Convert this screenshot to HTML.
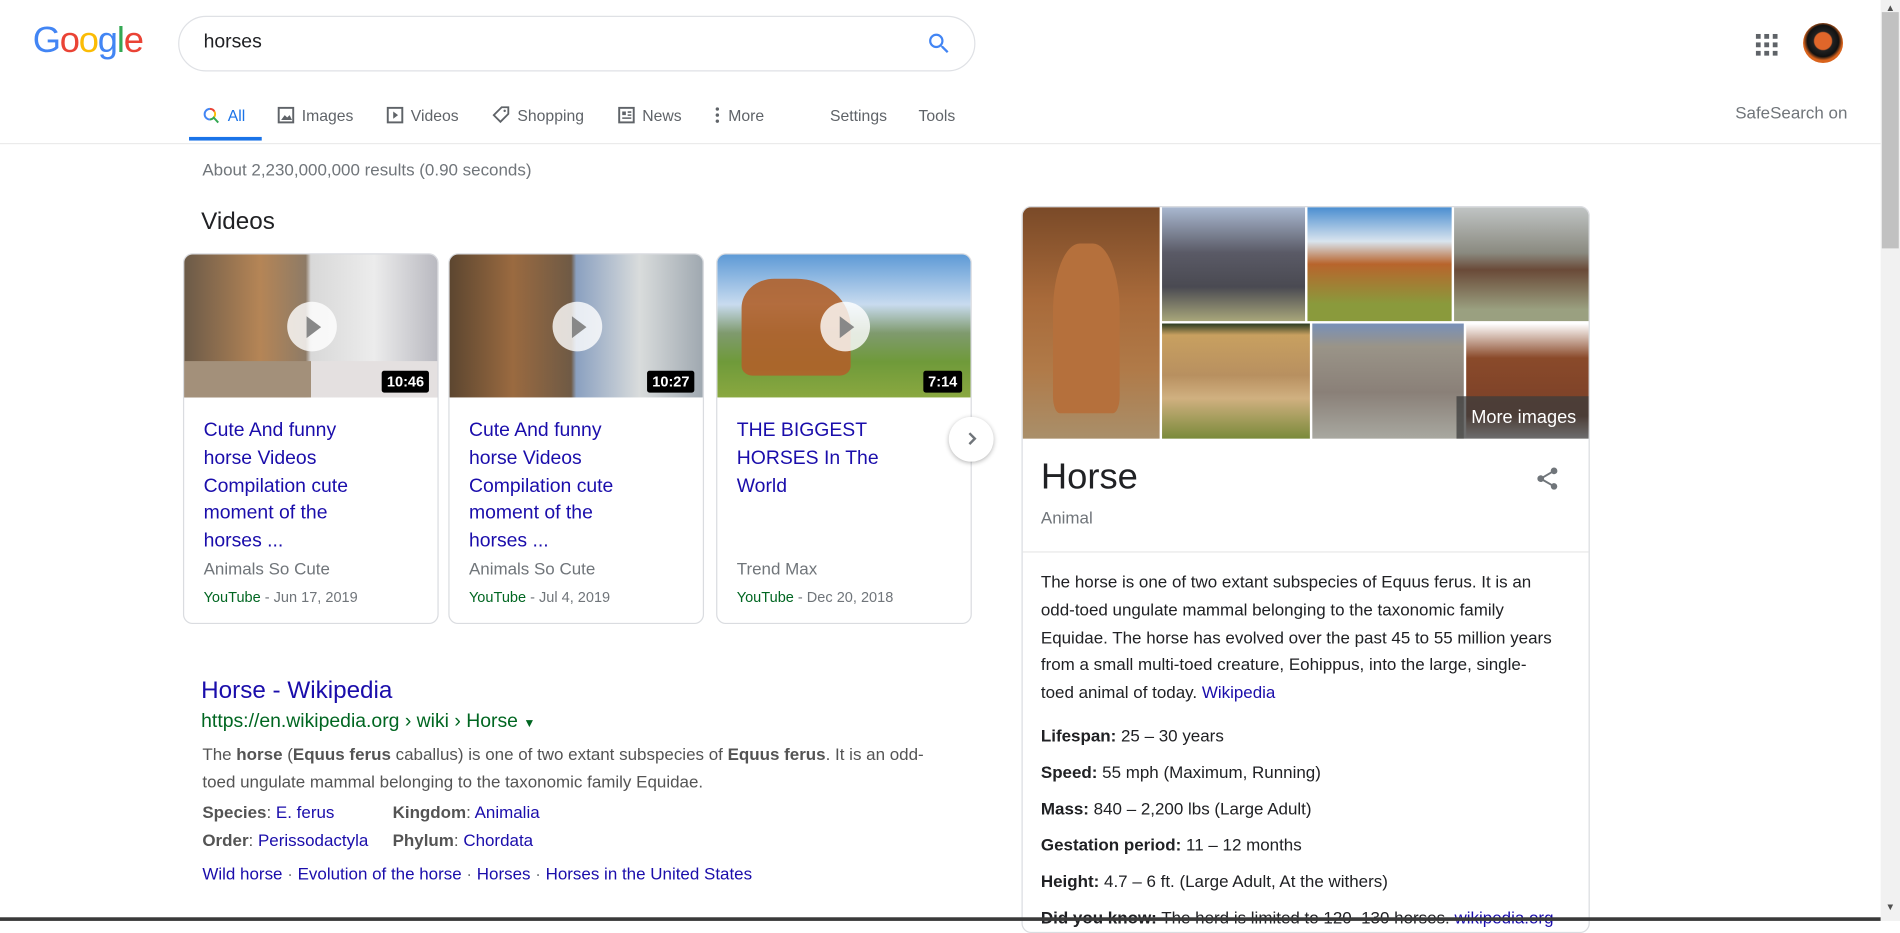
<!DOCTYPE html>
<html><head><meta charset="utf-8"><style>
*{box-sizing:border-box;margin:0;padding:0}
html,body{width:1900px;height:921px;overflow:hidden;background:#fff}
#w{position:absolute;left:0;top:0;width:1568px;height:760px;transform:scale(1.21173);transform-origin:0 0;font-family:"Liberation Sans",Arial,sans-serif;color:#202124}
.a{position:absolute;white-space:nowrap}
.tab{position:absolute;top:88px;font-size:13px;color:#5f6368}
.card{position:absolute;top:209px;width:211px;height:306px;border:1px solid #dadce0;border-radius:8px;overflow:hidden;background:#fff}
.thumb{position:absolute;left:0;top:0;width:100%;height:118px}
.play{position:absolute;left:85px;top:39px;width:41px;height:41px;border-radius:50%;background:rgba(255,255,255,.8)}
.play:after{content:"";position:absolute;left:16px;top:12px;border-left:12px solid #888;border-top:9px solid transparent;border-bottom:9px solid transparent}
.dur{position:absolute;right:7px;top:96px;background:#000;color:#fff;font-size:12px;font-weight:bold;padding:2px 4px;border-radius:2px}
.vt{position:absolute;left:16px;top:135px;font-size:16px;line-height:22.8px;color:#1a0dab;width:150px}
.ch{position:absolute;left:16px;top:251px;font-size:14px;color:#70757a}
.yt{position:absolute;left:16px;top:276px;font-size:12px;color:#70757a}
.yt b{font-weight:normal;color:#006621}
.kp{position:absolute;left:843px;top:170px;width:469px;height:600px;border:1px solid #dadce0;border-radius:8px;overflow:hidden}
.im{position:absolute}
.f{position:absolute;left:15px;font-size:14px;color:#202124}
.f b{color:#202124}
</style></head><body><div id="w">
<div class="a" style="left:27px;top:17px;font-size:30px;letter-spacing:-1px;font-family:'Liberation Sans',sans-serif"><span style="color:#4285f4">G</span><span style="color:#ea4335">o</span><span style="color:#fbbc05">o</span><span style="color:#4285f4">g</span><span style="color:#34a853">l</span><span style="color:#ea4335">e</span></div>
<div class="a" style="left:147px;top:13px;width:658px;height:46px;border:1px solid #dfe1e5;border-radius:23px"></div>
<div class="a" style="left:168px;top:26px;font-size:16px;color:#202124">horses</div>
<svg class="a" style="left:764px;top:25px" width="22" height="22" viewBox="0 0 24 24"><path fill="#4285f4" d="M15.5 14h-.79l-.28-.27A6.470 6.470 0 0016 9.5 6.5 6.5 0 109.5 16c1.61 0 3.09-.59 4.23-1.57l.27.28v.79l5 4.99L20.49 19l-4.99-5zm-6 0C7.01 14 5 11.990 5 9.5S7.01 5 9.5 5 14 7.01 14 9.5 11.99 14 9.5 14z"/></svg>
<svg class="a" style="left:1449px;top:28px" width="18" height="18" viewBox="0 0 18 18" fill="#5f6368"><rect x="0" y="0" width="4" height="4"/><rect x="7" y="0" width="4" height="4"/><rect x="14" y="0" width="4" height="4"/><rect x="0" y="7" width="4" height="4"/><rect x="7" y="7" width="4" height="4"/><rect x="14" y="7" width="4" height="4"/><rect x="0" y="14" width="4" height="4"/><rect x="7" y="14" width="4" height="4"/><rect x="14" y="14" width="4" height="4"/></svg>
<div class="a" style="left:1488px;top:19px;width:33px;height:33px;border-radius:50%;background:radial-gradient(circle at 50% 45%,#e0662a 0 7px,#222 8px,#111 13px,#d9631c 16px)"></div>
<div class="a" style="left:1432px;top:85px;font-size:14px;color:#70757a">SafeSearch on</div>
<svg class="a" style="left:167px;top:88px" width="15" height="15" viewBox="0 0 24 24"><path fill="none" stroke="#4285f4" stroke-width="2.6" d="M10 3a7 7 0 100 14"/><path fill="none" stroke="#ea4335" stroke-width="2.6" d="M10 3a7 7 0 016 3.5"/><path fill="none" stroke="#fbbc05" stroke-width="2.6" d="M16 6.5a7 7 0 01-1 8"/><path fill="none" stroke="#34a853" stroke-width="2.6" d="M10 17a7 7 0 005-2.5L21 21"/></svg>
<div class="tab" style="left:188px;color:#1a73e8">All</div>
<div class="a" style="left:156px;top:113px;width:60px;height:3px;background:#1a73e8"></div>
<svg class="a" style="left:229px;top:88px" width="14" height="14" viewBox="0 0 14 14"><rect x="1" y="1" width="12" height="12" fill="none" stroke="#5f6368" stroke-width="1.6"/><path d="M3 11l3-4 2 2 2-2 2 4z" fill="#5f6368"/></svg>
<div class="tab" style="left:249px">Images</div>
<svg class="a" style="left:319px;top:88px" width="14" height="14" viewBox="0 0 14 14"><rect x="1" y="1" width="12" height="12" fill="none" stroke="#5f6368" stroke-width="1.6"/><path d="M5.5 4l4 3-4 3z" fill="#5f6368"/></svg>
<div class="tab" style="left:339px">Videos</div>
<svg class="a" style="left:406px;top:87px" width="15" height="15" viewBox="0 0 15 15"><path d="M8 1.5h5.5V7L7 13.5 1.5 8z" fill="none" stroke="#5f6368" stroke-width="1.5"/><circle cx="10.5" cy="4.5" r="1" fill="#5f6368"/></svg>
<div class="tab" style="left:427px">Shopping</div>
<svg class="a" style="left:510px;top:88px" width="14" height="14" viewBox="0 0 14 14"><rect x="1" y="1" width="12" height="12" fill="none" stroke="#5f6368" stroke-width="1.6"/><rect x="3.5" y="4" width="3" height="3" fill="#5f6368"/><path d="M8 4.5h3M8 7h3M3.5 9.5h7.5" stroke="#5f6368" stroke-width="1.3"/></svg>
<div class="tab" style="left:530px">News</div>
<svg class="a" style="left:590px;top:88px" width="4" height="14" viewBox="0 0 4 14" fill="#5f6368"><circle cx="2" cy="2" r="1.4"/><circle cx="2" cy="7" r="1.4"/><circle cx="2" cy="12" r="1.4"/></svg>
<div class="tab" style="left:601px">More</div>
<div class="tab" style="left:685px">Settings</div>
<div class="tab" style="left:758px">Tools</div>
<div class="a" style="left:0;top:118px;width:1552px;height:1px;background:#ebebeb"></div>
<div class="a" style="left:167px;top:132px;font-size:14px;color:#70757a">About 2,230,000,000 results (0.90 seconds)</div>
<div class="a" style="left:166px;top:172px;font-size:20px;color:#202124">Videos</div>

<div class="card" style="left:151px"><div class="thumb" style="background:linear-gradient(90deg,#6b5a48 0,#b58556 30%,#8e7b66 48%,#d8d8d8 50%,#ececec 75%,#b9b9c0 100%)"><div style="position:absolute;left:0;bottom:0;width:100%;height:30px;background:linear-gradient(90deg,#a3907a 50%,#e4e0e0 50%)"></div></div><div class="play"></div><div class="dur">10:46</div>
<div class="vt">Cute And funny horse Videos Compilation cute moment of the horses ...</div><div class="ch">Animals So Cute</div><div class="yt"><b>YouTube</b> - Jun 17, 2019</div></div>
<div class="card" style="left:370px"><div class="thumb" style="background:linear-gradient(90deg,#5c4630 0,#9a6a40 25%,#6f5a45 48%,#8aa0c0 50%,#d9dcdc 75%,#9fa8b0 100%)"></div><div class="play"></div><div class="dur">10:27</div>
<div class="vt">Cute And funny horse Videos Compilation cute moment of the horses ...</div><div class="ch">Animals So Cute</div><div class="yt"><b>YouTube</b> - Jul 4, 2019</div></div>
<div class="card" style="left:591px"><div class="thumb" style="background:linear-gradient(180deg,#5e9ad6 0,#c8dbef 35%,#7f9a6e 55%,#6f9a3a 75%,#8aa840 100%)"><div style="position:absolute;left:20px;top:20px;width:90px;height:80px;background:#b0602a;border-radius:30% 50% 10% 10%;opacity:.9"></div></div><div class="play"></div><div class="dur">7:14</div>
<div class="vt">THE BIGGEST HORSES In The World</div><div class="ch">Trend Max</div><div class="yt"><b>YouTube</b> - Dec 20, 2018</div></div>
<div class="a" style="left:783px;top:344px;width:37px;height:37px;border-radius:50%;background:#fff;box-shadow:0 1px 4px rgba(0,0,0,.3)"><svg style="position:absolute;left:12px;top:11px" width="14" height="14" viewBox="0 0 14 14"><path d="M5 2.5l4.5 4.5L5 11.5" fill="none" stroke="#70757a" stroke-width="2"/></svg></div>

<div class="a" style="left:166px;top:559px;font-size:20px;color:#1a0dab">Horse - Wikipedia</div>
<div class="a" style="left:166px;top:587px;font-size:16px;color:#006621">https://en.wikipedia.org › wiki › Horse <span style="font-size:10px">▼</span></div>
<div class="a" style="left:167px;top:611px;font-size:14px;line-height:23px;color:#545454;white-space:normal;width:620px">The <b>horse</b> (<b>Equus ferus</b> caballus) is one of two extant subspecies of <b>Equus ferus</b>. It is an odd-toed ungulate mammal belonging to the taxonomic family Equidae.</div>
<div class="a" style="left:167px;top:662px;font-size:14px;color:#545454"><b>Species</b>: <span style="color:#1a0dab">E. ferus</span></div>
<div class="a" style="left:324px;top:662px;font-size:14px;color:#545454"><b>Kingdom</b>: <span style="color:#1a0dab">Animalia</span></div>
<div class="a" style="left:167px;top:685px;font-size:14px;color:#545454"><b>Order</b>: <span style="color:#1a0dab">Perissodactyla</span></div>
<div class="a" style="left:324px;top:685px;font-size:14px;color:#545454"><b>Phylum</b>: <span style="color:#1a0dab">Chordata</span></div>
<div class="a" style="left:167px;top:713px;font-size:14px;color:#1a0dab">Wild horse <span style="color:#70757a">·</span> Evolution of the horse <span style="color:#70757a">·</span> Horses <span style="color:#70757a">·</span> Horses in the United States</div>

<div class="kp">
<div class="im" style="left:0;top:0;width:113px;height:191px;background:linear-gradient(180deg,#7a4a28,#a86a3a 40%,#b07a48 70%,#a98f6a)"><div style="position:absolute;left:25px;top:30px;width:55px;height:140px;background:#b5703c;border-radius:40% 40% 10% 10%"></div></div>
<div class="im" style="left:115px;top:0;width:118px;height:94px;background:linear-gradient(180deg,#a9b8d0,#5a5a66 40%,#4a4a52 70%,#a8a67a)"></div>
<div class="im" style="left:235px;top:0;width:119px;height:94px;background:linear-gradient(180deg,#4a8ed0,#d9e4ee 30%,#b8642c 50%,#8a9a3c 85%)"></div>
<div class="im" style="left:356px;top:0;width:113px;height:94px;background:linear-gradient(180deg,#c0c4c4,#8a8a80 40%,#6a4a38 55%,#9aa080 90%)"></div>
<div class="im" style="left:115px;top:96px;width:122px;height:95px;background:linear-gradient(180deg,#2a3a20 0,#c8a060 10%,#b89060 45%,#d0b080 65%,#7a8a3a)"></div>
<div class="im" style="left:239px;top:96px;width:125px;height:95px;background:linear-gradient(180deg,#7890b8,#9a9488 20%,#8a8078 60%,#a8a8a0)"></div>
<div class="im" style="left:366px;top:96px;width:103px;height:95px;background:linear-gradient(180deg,#fff 0,#8a4a2a 30%,#7a4028 80%,#fff)"></div>
<div class="im" style="left:358px;top:156px;width:111px;height:35px;background:rgba(60,60,60,.75);color:#fff;font-size:15px;line-height:35px;text-align:center">More images</div>
<div class="a" style="left:15px;top:206px;font-size:30px;color:#202124">Horse</div>
<svg class="a" style="left:422px;top:213px" width="22" height="22" viewBox="0 0 24 24"><path fill="#70757a" d="M18 16.08c-.76 0-1.44.3-1.96.77L8.91 12.7c.05-.23.09-.46.09-.7s-.04-.47-.09-.7l7.05-4.11A2.99 2.99 0 0021 5a3 3 0 10-6 0c0 .24.04.47.09.7L8.04 9.81A2.99 2.99 0 003 12a3 3 0 005.04 2.19l7.12 4.16c-.05.21-.08.43-.08.65A2.92 2.92 0 1018 16.08z"/></svg>
<div class="a" style="left:15px;top:248px;font-size:14px;color:#70757a">Animal</div>
<div class="a" style="left:0;top:284px;width:469px;height:1px;background:#e8e8e8"></div>
<div class="a" style="left:15px;top:298px;width:422px;white-space:normal;font-size:14px;line-height:22.8px;color:#202124">The horse is one of two extant subspecies of Equus ferus. It is an odd-toed ungulate mammal belonging to the taxonomic family Equidae. The horse has evolved over the past 45 to 55 million years from a small multi-toed creature, Eohippus, into the large, single-toed animal of today. <span style="color:#1a0dab">Wikipedia</span></div>
<div class="f" style="top:428px"><b>Lifespan:</b> 25 – 30 years</div>
<div class="f" style="top:458px"><b>Speed:</b> 55 mph (Maximum, Running)</div>
<div class="f" style="top:488px"><b>Mass:</b> 840 – 2,200 lbs (Large Adult)</div>
<div class="f" style="top:518px"><b>Gestation period:</b> 11 – 12 months</div>
<div class="f" style="top:548px"><b>Height:</b> 4.7 – 6 ft. (Large Adult, At the withers)</div>
<div class="f" style="top:578px"><b>Did you know:</b> The herd is limited to 120–130 horses. <span style="color:#1a0dab">wikipedia.org</span></div>
</div>

<div class="a" style="left:1552px;top:0;width:16px;height:760px;background:#f1f1f1"></div>
<div class="a" style="left:1553px;top:10px;width:14px;height:195px;background:#c1c1c1"></div>
<div class="a" style="left:1556px;top:2px;font-size:8px;color:#505050">▲</div>
<div class="a" style="left:1556px;top:744px;font-size:8px;color:#505050">▼</div>
<div class="a" style="left:0;top:757px;width:1552px;height:3px;background:#3a3a3a"></div>
</div></body></html>
